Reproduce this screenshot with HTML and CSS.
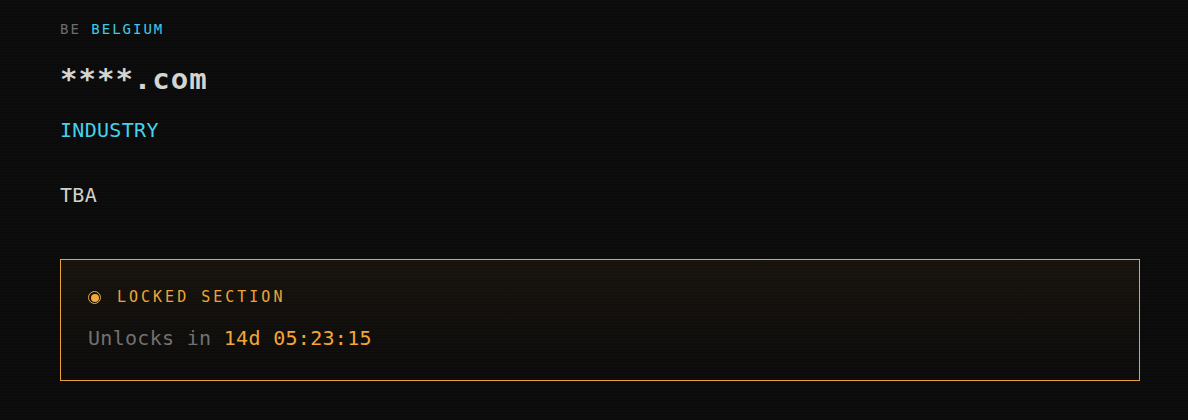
FILE: index.html
```html
<!DOCTYPE html>
<html lang="en">
<head>
  <meta charset="UTF-8" />
  <meta name="viewport" content="width=device-width, initial-scale=1" />
  <title>****.com</title>
  <link rel="stylesheet" href="styles.css">
</head>
<body>
  <main class="listing">
    <div class="country">
      <span class="country-code">BE</span>
      <span class="country-name">BELGIUM</span>
    </div>
    <h1 class="domain">****.com</h1>
    <div class="industry">INDUSTRY</div>
    <p class="summary">TBA</p>

    <section class="locked">
      <div class="locked-title">
        <span class="locked-dot"></span>
        <span>LOCKED SECTION</span>
      </div>
      <div class="countdown">Unlocks in <span class="countdown-time" id="timer">14d 05:23:15</span></div>
    </section>
  </main>
</body>
</html>
```

FILE: styles.css
```css
html, body {
  margin: 0;
  background-color: #0b0b0b;
}
body {
  font-family: "DejaVu Sans Mono", "Liberation Mono", monospace;
  color: #d2d2cc;
  /* faint CRT scanlines */
  background-image: repeating-linear-gradient(
    180deg,
    rgba(255, 255, 255, 0.012) 0px,
    rgba(255, 255, 255, 0.012) 1px,
    transparent 1px,
    transparent 3px
  );
  min-height: 420px;
}
.listing {
  padding: 19px 48px 30px 60px;
}
.country {
  font-size: 14px;
  line-height: 20px;
  letter-spacing: 2px;
}
.country-code {
  color: #6c6c6c;
}
.country-name {
  color: #3fcbe6;
}
.domain {
  margin: 22px 0 0;
  font-size: 29px;
  line-height: 36px;
  font-weight: bold;
  letter-spacing: 1px;
  color: #d4d4d0;
}
.industry {
  margin-top: 19px;
  font-size: 20px;
  line-height: 28px;
  letter-spacing: 0.3px;
  color: #44d2ec;
}
.summary {
  margin: 37px 0 0;
  font-size: 20px;
  line-height: 28px;
  letter-spacing: 0.3px;
  color: #d2d2cc;
}
.locked {
  margin-top: 50px;
  padding: 27px 27px 28px;
  border: 1px solid #eaa337;
  background: linear-gradient(180deg, rgba(240, 160, 48, 0.055), rgba(240, 160, 48, 0.0));
}
.locked-title {
  display: flex;
  align-items: center;
  gap: 16px;
  font-size: 15px;
  line-height: 20px;
  letter-spacing: 0.2em;
  color: #eda53a;
}
.locked-dot {
  width: 13px;
  height: 13px;
  box-sizing: border-box;
  border-radius: 50%;
  border: 1.5px solid #f2a83c;
  padding: 1.5px;
  background: #f2a83c;
  background-clip: content-box;
}
.countdown {
  margin-top: 17px;
  font-size: 20px;
  line-height: 28px;
  letter-spacing: 0.3px;
  color: #717171;
}
.countdown-time {
  color: #f3a535;
}
```
